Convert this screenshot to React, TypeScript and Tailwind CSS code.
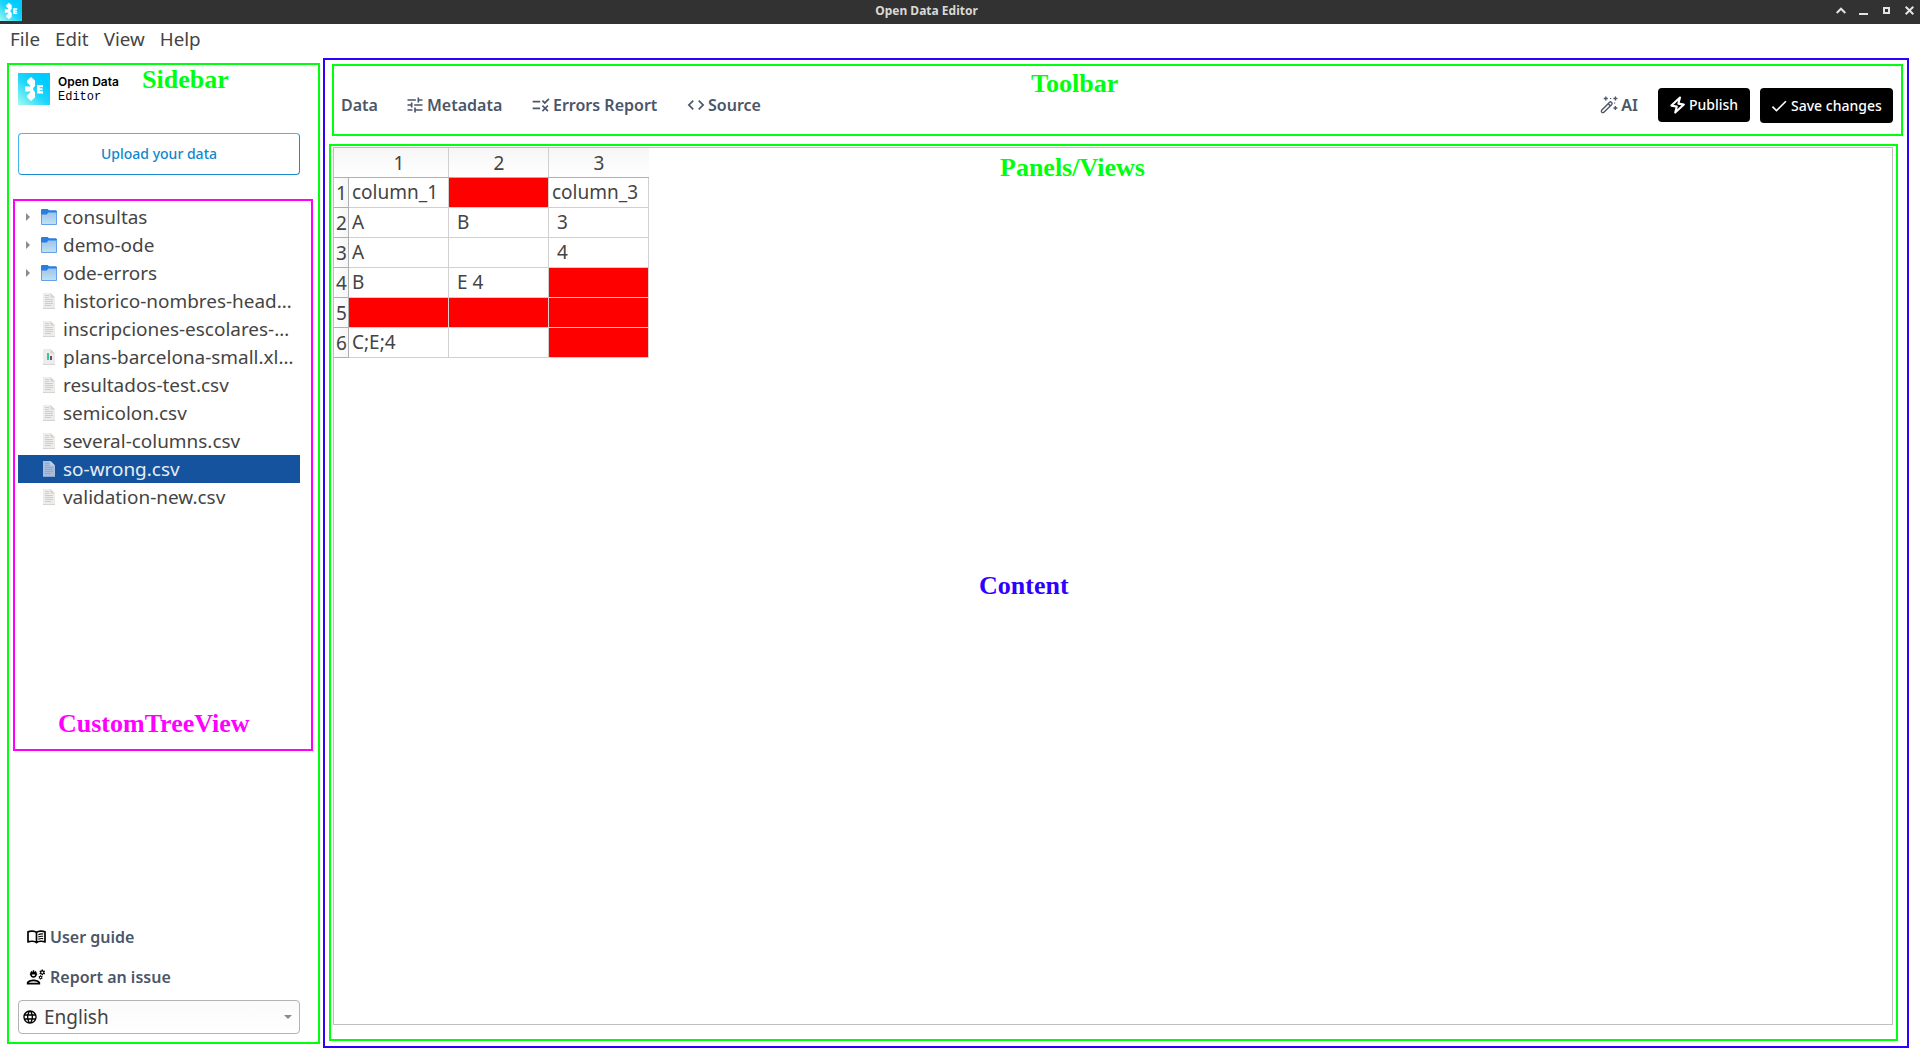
import React from "react";
import {
  MdTune,
  MdRule,
  MdCode,
  MdCheck,
  MdOutlineEngineering,
  MdLanguage,
} from "react-icons/md";

const UI = "font-['Noto_Sans',sans-serif]";
const LABEL = "absolute font-['Liberation_Serif',serif] font-bold text-[26px] leading-[30px] whitespace-nowrap";

function Logo({ size, id }: { size: number; id: string }) {
  return (
    <svg width={size} height={size} viewBox="0 0 32 32" className="shrink-0">
      <defs>
        <linearGradient id={id} x1="0" y1="1" x2="0.75" y2="0.2">
          <stop offset="0" stopColor="#a4fbf0" />
          <stop offset="0.6" stopColor="#1fd6fb" />
          <stop offset="1" stopColor="#00cbff" />
        </linearGradient>
      </defs>
      <rect width="32" height="32" fill={`url(#${id})`} />
      <path
        d="M13 4 L17 7.5 V13 L15.2 15 V17 L17 19 V24.5 L13 28 L9 24.2 V22.6 L12.6 19 L11.6 18.4 H7 V13.6 H11.6 L12.6 13 L9 9.4 V7.8 Z"
        fill="#fff"
      />
      <path d="M19 12 H25 V14.2 H21.6 V15.2 H24.6 V17.3 H21.6 V18.3 H25 V20.5 H19 Z" fill="#fff" />
    </svg>
  );
}

function BookIcon() {
  return (
    <svg width="19" height="14" viewBox="0 0 19 14" fill="none" stroke="#000">
      <path
        d="M9.5 2.4 C7.5 0.8 3.5 0.6 1 1.8 V12 C3.5 10.8 7.5 11 9.5 12.6 C11.5 11 15.5 10.8 18 12 V1.8 C15.5 0.6 11.5 0.8 9.5 2.4 Z M9.5 2.4 V12.6"
        strokeWidth="1.7"
        strokeLinejoin="round"
      />
      <path d="M11.3 4.7 Q13.5 3.6 16.2 4 M11.3 7 Q13.5 5.9 16.2 6.3 M11.3 9.3 Q13.5 8.2 16.2 8.6" strokeWidth="1.1" />
    </svg>
  );
}

function BoltIcon() {
  return (
    <svg width="20" height="20" viewBox="0 0 20 20" fill="none" stroke="#fff" className="mr-[1px] shrink-0">
      <path d="M12 2.6 L3.4 10.6 L8.8 11.6 L7.2 17.6 L15.9 9.6 L10.4 8.6 Z" strokeWidth="2.1" strokeLinejoin="round" />
    </svg>
  );
}

function WandIcon() {
  return (
    <svg width="18" height="18" viewBox="0 0 18 18" fill="none" stroke="currentColor">
      <path d="M1.6 14.3 L9.6 6.2 Q10.4 5.5 11.2 6.2 L11.8 6.8 Q12.5 7.6 11.8 8.4 L3.7 16.4 Q2.7 17 1.8 16.2 Q1 15.3 1.6 14.3 Z M8.2 7.8 L10.2 9.8" strokeWidth="1.4" />
      <path d="M5.8 0.5 V4.5 M3.8 2.5 H7.8 M15.4 0.5 V4.5 M13.4 2.5 H17.4 M15.4 10 V14 M13.4 12 H17.4" strokeWidth="1.3" />
      <path d="M10 2.5 H11.2 M14 7 H15.2" strokeWidth="1.2" />
    </svg>
  );
}

function FolderIcon() {
  return (
    <svg width="16" height="16" viewBox="0 0 16 16">
      <defs>
        <linearGradient id="folder" x1="0" y1="0" x2="0" y2="1">
          <stop offset="0" stopColor="#9cc4ea" />
          <stop offset="1" stopColor="#c3e2f0" />
        </linearGradient>
      </defs>
      <path d="M0 1 L1 0 H6.5 L8 1.5 H15 L16 2.5 V8 H0 Z" fill="#2a7de1" />
      <path d="M0.5 5.5 H5.5 L7.5 3.5 H15.5 V15.5 H0.5 Z" fill="url(#folder)" stroke="#62a0ea" />
      <path d="M0 5 V1 L1 0 H6.5 L8 1.5 H15 L16 2.5 V3 H7.3 L5.3 5 Z" fill="#2a7de1" />
    </svg>
  );
}

function FileIcon({ kind, selected }: { kind: string; selected?: boolean }) {
  return (
    <svg width="12" height="16" viewBox="0 0 12 16">
      <path d="M0 0 H7.5 L12 4.5 V16 H0 Z" fill={selected ? "#a9bddb" : "#edecea"} />
      <path d="M7.5 0 V4.5 H12 Z" fill={selected ? "#c3d1e6" : "#d4d2ce"} />
      <path d="M0 15.5 H12" stroke={selected ? "#8aa6cf" : "#d6d4d0"} />
      {kind === "sheet" ? (
        <>
          <rect x="4" y="4" width="2" height="7" fill="#33d17a" />
          <rect x="7" y="7" width="2" height="4" fill="#813d9c" />
        </>
      ) : (
        <path
          d="M2 2.5 H6 M2 4.5 H6 M2 6.5 H10 M2 8.5 H10 M2 10.5 H10 M2 12.5 H8"
          stroke={selected ? "#92a9cd" : "#d0ceca"}
        />
      )}
    </svg>
  );
}

const tree = [
  { name: "consultas", kind: "folder" },
  { name: "demo-ode", kind: "folder" },
  { name: "ode-errors", kind: "folder" },
  { name: "historico-nombres-head…", kind: "file" },
  { name: "inscripciones-escolares-…", kind: "file" },
  { name: "plans-barcelona-small.xl…", kind: "sheet" },
  { name: "resultados-test.csv", kind: "file" },
  { name: "semicolon.csv", kind: "file" },
  { name: "several-columns.csv", kind: "file" },
  { name: "so-wrong.csv", kind: "file", selected: true },
  { name: "validation-new.csv", kind: "file" },
];

const ERR = null;
const rows: (string | null)[][] = [
  ["column_1", ERR, "column_3"],
  ["A", " B", " 3"],
  ["A", "", " 4"],
  ["B", " E 4", ERR],
  [ERR, ERR, ERR],
  ["C;E;4", "", ERR],
];

function TitleBar() {
  return (
    <header className="relative flex h-6 items-center justify-center bg-[#323232]">
      <div className="absolute left-0 top-0 h-[21px] w-[22px] overflow-hidden">
        <Logo size={22} id="logo-small" />
      </div>
      <h1 className="relative top-[-1px] mr-[67px] text-[12px] font-bold leading-4 text-[#d9d9d7]">Open Data Editor</h1>
      <svg className="absolute right-[4px] top-[5px]" width="80" height="11" viewBox="0 0 80 11" fill="none" stroke="#e3e3e0" strokeWidth="2">
        <path d="M0.7 8 L5 3.7 L9.3 8" />
        <path d="M23 9 H32" />
        <rect x="48" y="3" width="5" height="5" />
        <path d="M69.7 1.7 L77.3 9.3 M77.3 1.7 L69.7 9.3" />
      </svg>
    </header>
  );
}

function Sidebar() {
  return (
    <aside className="relative mt-[5px] flex h-[981px] w-[313px] shrink-0 flex-col border-2 border-[#00ff0d] pl-[9px]">
      <div className="mt-2 flex h-8 items-start">
        <Logo size={32} id="logo-large" />
        <div className="ml-2 mt-[2px] text-black">
          <div className="font-['Inter',sans-serif] text-[12px] font-semibold leading-[14px]">Open Data</div>
          <div className="font-['Liberation_Mono',monospace] text-[12px] leading-[17px]">Editor</div>
        </div>
      </div>
      <span className={`${LABEL} left-[133px] top-0 text-[#00ff0d]`}>Sidebar</span>
      <button className="mt-7 h-[42px] w-[282px] rounded-[4px] border border-[#1b8bd0] border-t-[#47b5f0] border-l-[#47b5f0] pb-[2px] text-[14px] font-medium text-[#0f87cd]">
        Upload your data
      </button>
      <div className="relative -ml-[5px] mt-6 h-[552px] w-[300px] border-2 border-[#ff00ff] pl-[3px] pt-[2px]">
        {tree.map((n) => (
          <div
            key={n.name}
            className={`flex h-7 w-[282px] items-center ${n.selected ? "bg-[#15539e] text-[#e6edf6]" : "text-[#444444]"}`}
          >
            <span className="flex w-[23px] justify-start pl-2">
              {n.kind === "folder" && (
                <svg width="4" height="8" viewBox="0 0 4 8">
                  <path d="M0 0 L4 4 L0 8 Z" fill="#8b8b8b" />
                </svg>
              )}
            </span>
            <span className="flex w-4 justify-center">
              {n.kind === "folder" ? <FolderIcon /> : <FileIcon kind={n.kind} selected={n.selected} />}
            </span>
            <span className="ml-[6px] whitespace-nowrap pt-px text-[18.95px] leading-[29px]">{n.name}</span>
          </div>
        ))}
        <span className={`${LABEL} left-[43px] top-[508px] text-[#ff00ff]`}>CustomTreeView</span>
      </div>
      <div className="mt-auto mb-2 w-[282px]">
        <a className="flex h-10 items-center pl-[9px] text-[16px] font-semibold text-[#4b5669]">
          <span className="mr-[4px]">
            <BookIcon />
          </span>
          User guide
        </a>
        <a className="flex h-10 items-center pl-2 text-[16px] font-semibold text-[#4b5669]">
          <MdOutlineEngineering className="mr-[4px] h-5 w-5 text-black" />
          Report an issue
        </a>
        <div className="mt-[3px] flex h-[34px] items-center rounded-[4px] border border-[#b3b3b3] bg-gradient-to-b from-[#fafafa] to-white pl-[3px] pr-[7px] text-[19px] text-[#444444]">
          <MdLanguage className="mr-[6px] h-4 w-4 text-black" />
          English
          <svg className="ml-auto" width="8" height="4" viewBox="0 0 8 4">
            <path d="M0 0 H8 L4 4 Z" fill="#8b8b8b" />
          </svg>
        </div>
      </div>
    </aside>
  );
}

function Toolbar() {
  return (
    <nav className="relative ml-[7px] mt-1 flex h-[72px] w-[1571px] items-center border-2 border-[#00ff0d] pl-[7px] pr-2 pt-[10px] text-[16px] font-semibold text-[#4b5669]">
      <span className="w-[64px]">Data</span>
      <span className="flex w-[126px] items-center">
        <MdTune className="mr-[2px] h-5 w-5" />
        Metadata
      </span>
      <span className="flex w-[155px] items-center">
        <MdRule className="mr-[2px] h-5 w-5" />
        Errors Report
      </span>
      <span className="flex items-center">
        <MdCode className="mr-[2px] h-5 w-5" />
        Source
      </span>
      <span className="ml-auto mr-[20px] flex items-center">
        <span className="mr-[3px]">
          <WandIcon />
        </span>
        AI
      </span>
      <button className="mr-[10px] flex h-[34px] w-[92px] items-center rounded-[4px] bg-black pb-px pl-[10px] text-[14px] font-medium text-white">
        <BoltIcon />
        Publish
      </button>
      <button className="mt-[1px] flex h-[35px] w-[133px] items-center rounded-[4px] bg-black pl-[9px] text-[14px] font-medium text-white">
        <MdCheck className="mr-[2px] h-5 w-5" />
        Save changes
      </button>
      <span className={`${LABEL} left-[697px] top-[3px] text-[#00ff0d]`}>Toolbar</span>
    </nav>
  );
}

function DataPanel() {
  return (
    <section className="relative ml-1 mt-2 h-[897px] w-[1569px] border-2 border-[#00ff0d] pl-[2px] pt-[1px]">
      <div className="h-[878px] w-[1560px] border border-[#bfbfbf] text-[19px] text-[#444444]">
        <div className="flex h-[30px] w-[315px] border-b border-[#b0b0b0] bg-gradient-to-b from-[#f6f6f6] to-white">
          <div className="w-[15px]" />
          <div className="w-[100px] border-r border-[#d0d0d0] pl-px text-center leading-[31px]">1</div>
          <div className="w-[100px] border-r border-[#d0d0d0] pl-px text-center leading-[31px]">2</div>
          <div className="w-[100px] text-center leading-[31px]">3</div>
        </div>
        {rows.map((r, i) => (
          <div key={i} className="flex h-[30px]">
            <div className="w-[15px] border-b border-r border-[#b0b0b0] bg-gradient-to-r from-white to-[#f6f6f6] pl-[2px] leading-[30px]">
              {i + 1}
            </div>
            {r.map((c, j) => (
              <div
                key={j}
                className={`w-[100px] whitespace-pre border-b border-r border-[#d0d0d0] pl-[3px] leading-[28px] ${c === null ? "bg-[#ff0000]" : ""}`}
              >
                {c}
              </div>
            ))}
          </div>
        ))}
      </div>
      <span className={`${LABEL} left-[669px] top-[7px] text-[#00ff0d]`}>Panels/Views</span>
    </section>
  );
}

export default function App() {
  return (
    <div className={`${UI} flex h-[1052px] w-[1920px] flex-col overflow-hidden bg-white`}>
      <TitleBar />
      <div className="flex h-[34px] gap-[15px] pl-[10px] text-[18.8px] leading-[31px] text-[#444444]">
        <span>File</span>
        <span>Edit</span>
        <span>View</span>
        <span>Help</span>
      </div>
      <div className="flex pl-[7px]">
        <Sidebar />
        <main className="relative ml-[3px] h-[990px] w-[1586px] border-2 border-[#2f00ff]">
          <Toolbar />
          <DataPanel />
          <span className={`${LABEL} left-[654px] top-[511px] text-[#2f00ff]`}>Content</span>
        </main>
      </div>
    </div>
  );
}
